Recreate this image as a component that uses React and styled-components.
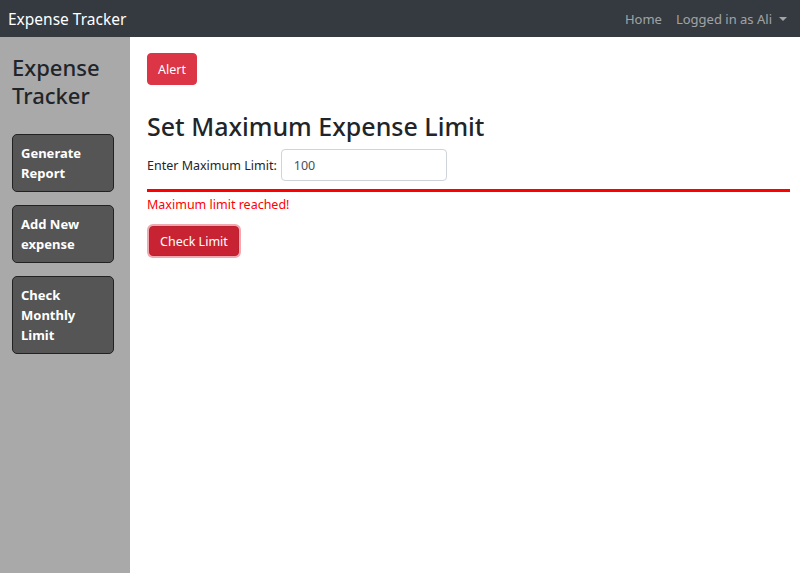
import React, { useState } from 'react';
import styled, { createGlobalStyle } from 'styled-components';

const GlobalStyle = createGlobalStyle`
  html, body {
    margin: 0;
    padding: 0;
    height: 100%;
  }
  body {
    font-family: "Noto Sans", "Open Sans", sans-serif;
    color: #212529;
    background: #fff;
  }
  #root {
    height: 100%;
  }
`;

const Page = styled.div`
  display: flex;
  flex-direction: column;
  height: 573px;
`;

const Navbar = styled.nav`
  display: flex;
  align-items: center;
  justify-content: space-between;
  height: 37px;
  padding: 0 8px;
  background-color: #343a40;
`;

const Brand = styled.span`
  color: #fff;
  font-size: 15.5px;
`;

const NavLinks = styled.div`
  display: flex;
  align-items: center;
  gap: 14px;
  padding-right: 5px;
`;

const NavLink = styled.span`
  color: rgba(255, 255, 255, 0.55);
  font-size: 13px;
  display: flex;
  align-items: center;
`;

const Caret = styled.span`
  display: inline-block;
  margin-left: 7px;
  border-top: 4px solid rgba(255, 255, 255, 0.55);
  border-left: 4px solid transparent;
  border-right: 4px solid transparent;
`;

const Body = styled.div`
  display: flex;
  flex: 1;
`;

const Sidebar = styled.aside`
  width: 130px;
  background-color: #a9a9a9;
  padding: 16px 12px;
  box-sizing: border-box;
  display: flex;
  flex-direction: column;
  gap: 13px;
`;

const SideTitle = styled.h2`
  margin: 0 0 12px;
  font-size: 22px;
  font-weight: 500;
  line-height: 28px;
  color: #212529;
`;

const SideButton = styled.div`
  width: 102px;
  box-sizing: border-box;
  background-color: #555;
  border: 1px solid #222;
  border-radius: 5px;
  padding: 8px 8px;
  color: #fff;
  font-weight: 700;
  font-size: 13px;
  line-height: 20px;
`;

const Main = styled.main`
  flex: 1;
  padding: 16px 10px 0 17px;
`;

const Button = styled.button`
  font-family: inherit;
  font-size: 12.5px;
  color: #fff;
  background-color: ${(p) => (p.$active ? '#c82333' : '#dc3545')};
  border: 1px solid ${(p) => (p.$active ? '#bd2130' : '#dc3545')};
  border-radius: 4px;
  padding: 0 10px;
  height: ${(p) => (p.$active ? '30px' : '32px')};
  box-shadow: ${(p) => (p.$active ? '0 0 0 2px rgba(225, 83, 97, 0.5)' : 'none')};
  margin: ${(p) => (p.$active ? '2px' : '0')};
  cursor: pointer;
`;

const Heading = styled.h1`
  margin: 25px 0 7px;
  font-size: 25px;
  font-weight: 500;
  line-height: 32px;
`;

const FormRow = styled.div`
  display: flex;
  align-items: center;
  gap: 4px;
  font-size: 12.5px;
`;

const Input = styled.input`
  width: 166px;
  height: 32px;
  box-sizing: border-box;
  border: 1px solid #ced4da;
  border-radius: 4px;
  padding: 0 12px;
  font-family: inherit;
  font-size: 12.5px;
  color: #495057;
`;

const Divider = styled.hr`
  margin: 8px 0 4px;
  border: none;
  border-top: 3px solid red;
`;

const ErrorText = styled.p`
  margin: 0 0 10px;
  color: red;
  font-size: 12.5px;
  line-height: 18px;
`;

const App = () => {
  const [limit, setLimit] = useState('100');

  return (
    <Page>
      <GlobalStyle />
      <Navbar>
        <Brand>Expense Tracker</Brand>
        <NavLinks>
          <NavLink>Home</NavLink>
          <NavLink>
            Logged in as Ali
            <Caret />
          </NavLink>
        </NavLinks>
      </Navbar>
      <Body>
        <Sidebar>
          <SideTitle>Expense Tracker</SideTitle>
          <SideButton>Generate Report</SideButton>
          <SideButton>Add New expense</SideButton>
          <SideButton>Check Monthly Limit</SideButton>
        </Sidebar>
        <Main>
          <Button>Alert</Button>
          <Heading>Set Maximum Expense Limit</Heading>
          <FormRow>
            <label>Enter Maximum Limit:</label>
            <Input value={limit} onChange={(e) => setLimit(e.target.value)} />
          </FormRow>
          <Divider />
          <ErrorText>Maximum limit reached!</ErrorText>
          <Button $active>Check Limit</Button>
        </Main>
      </Body>
    </Page>
  );
};

export default App;
